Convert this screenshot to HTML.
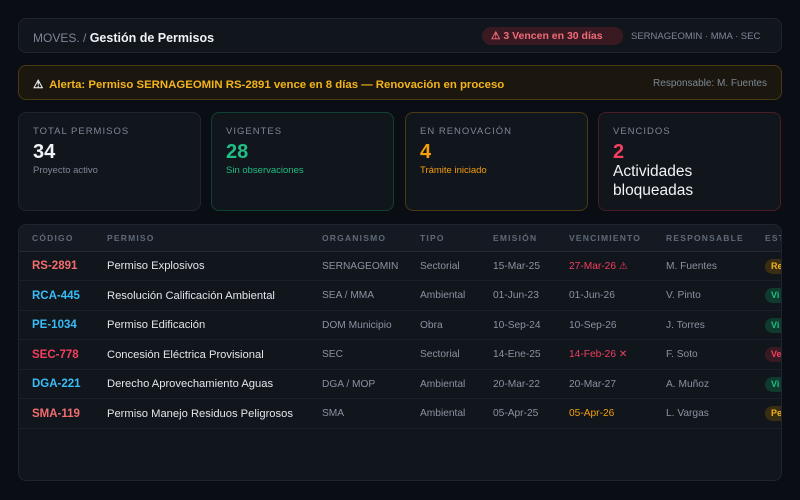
<!DOCTYPE html>
<html><head><meta charset="utf-8"><style>
*{box-sizing:border-box;margin:0;padding:0}
body{width:800px;height:500px;background:#0a0d13;font-family:"Liberation Sans",sans-serif;position:relative;overflow:hidden;color:#e6e9ef}
.box{position:absolute;border:1px solid #1f2530;border-radius:8px;background:#11151c}
.t{position:absolute;white-space:nowrap}
.lbl{font-size:9.5px;letter-spacing:1px;color:#7d8796}
.num{font-size:20px;font-weight:bold}
.sub{font-size:9.5px}
table{position:absolute;left:0;top:0;border-collapse:collapse;font-size:10.2px;width:820px}
th{height:26px;text-align:left;font-size:8.5px;letter-spacing:1.2px;color:#5f6978;font-weight:bold;background:#151a22;border-bottom:1px solid #232a35;padding:0}
td{height:29.5px;border-bottom:1px solid #1a1f28;padding:1px 0 0 0;color:#8a93a1}
.code{font-weight:bold;font-size:11.5px}
.nm{color:#e3e6eb;font-size:11.2px}
.b{display:inline-block;height:15px;width:24px;border-radius:8px;font-size:9px;font-weight:bold;padding:2px 0 0 6px;vertical-align:middle}
</style></head><body>
<div class="box" style="left:18px;top:18px;width:764px;height:35px">
 <div class="t" style="left:14px;top:12px;font-size:12px;color:#7d8796">MOVES. / <b style="color:#f1f3f6;font-size:12.5px">Gestión de Permisos</b></div>
 <div class="t" style="left:463px;top:8px;height:18px;width:141px;border-radius:9px;background:#3a1a22;color:#ef6b78;font-size:10.5px;font-weight:bold;padding:3px 0 0 9px">⚠ 3 Vencen en 30 días</div>
 <div class="t" style="left:612px;top:12px;font-size:9.5px;color:#7d8796">SERNAGEOMIN · MMA · SEC</div>
</div>
<div class="box" style="left:18px;top:65px;width:764px;height:35px;background:#1b170f;border-color:#4a3a14">
 <div class="t" style="left:14px;top:11px;font-size:11.4px;font-weight:bold;color:#f4b41a"><span style="color:#f1f3f6">⚠</span>&nbsp; Alerta: Permiso SERNAGEOMIN RS-2891 vence en 8 días — Renovación en proceso</div>
 <div class="t" style="right:14px;top:12px;font-size:10px;color:#7d8796">Responsable: M. Fuentes</div>
</div>
<div class="box" style="left:18px;top:112px;width:183px;height:99px">
 <div class="t lbl" style="left:14px;top:13px">TOTAL PERMISOS</div>
 <div class="t num" style="left:14px;top:28px;color:#f1f3f6">34</div>
 <div class="t sub" style="left:14px;top:52px;color:#7d8796">Proyecto activo</div>
</div>
<div class="box" style="left:211px;top:112px;width:183px;height:99px;border-color:#0f4236">
 <div class="t lbl" style="left:14px;top:13px">VIGENTES</div>
 <div class="t num" style="left:14px;top:28px;color:#1fbf86">28</div>
 <div class="t sub" style="left:14px;top:52px;color:#1fbf86">Sin observaciones</div>
</div>
<div class="box" style="left:405px;top:112px;width:183px;height:99px;border-color:#4a3a14">
 <div class="t lbl" style="left:14px;top:13px">EN RENOVACIÓN</div>
 <div class="t num" style="left:14px;top:28px;color:#f59e0b">4</div>
 <div class="t sub" style="left:14px;top:52px;color:#f59e0b">Trámite iniciado</div>
</div>
<div class="box" style="left:598px;top:112px;width:183px;height:99px;border-color:#4a1e26">
 <div class="t lbl" style="left:14px;top:13px">VENCIDOS</div>
 <div class="t num" style="left:14px;top:28px;color:#f43f5e">2</div>
 <div class="t" style="left:14px;top:49px;font-size:15.5px;line-height:19px;color:#f1f3f6;white-space:normal">Actividades<br>bloqueadas</div>
</div>
<div class="box" style="left:18px;top:224px;width:764px;height:257px;overflow:hidden">
<table>
<colgroup><col style="width:88px"><col style="width:215px"><col style="width:98px"><col style="width:73px"><col style="width:76px"><col style="width:97px"><col style="width:99px"><col></colgroup>
<tr><th style="padding-left:13px">CÓDIGO</th><th>PERMISO</th><th>ORGANISMO</th><th>TIPO</th><th>EMISIÓN</th><th>VENCIMIENTO</th><th>RESPONSABLE</th><th>ESTADO</th></tr>
<tr><td style="padding-left:13px" class="code"><span style="color:#f26d6d">RS-2891</span></td><td class="nm">Permiso Explosivos</td><td>SERNAGEOMIN</td><td>Sectorial</td><td>15-Mar-25</td><td style="color:#f43f5e">27-Mar-26 ⚠</td><td>M. Fuentes</td><td><span class="b" style="background:#3a2e12;color:#f4b41a">Re</span></td></tr>
<tr><td style="padding-left:13px" class="code"><span style="color:#38bdf8">RCA-445</span></td><td class="nm">Resolución Calificación Ambiental</td><td>SEA / MMA</td><td>Ambiental</td><td>01-Jun-23</td><td>01-Jun-26</td><td>V. Pinto</td><td><span class="b" style="background:#0f3a2e;color:#1fbf86">Vi</span></td></tr>
<tr><td style="padding-left:13px" class="code"><span style="color:#38bdf8">PE-1034</span></td><td class="nm">Permiso Edificación</td><td>DOM Municipio</td><td>Obra</td><td>10-Sep-24</td><td>10-Sep-26</td><td>J. Torres</td><td><span class="b" style="background:#0f3a2e;color:#1fbf86">Vi</span></td></tr>
<tr><td style="padding-left:13px" class="code"><span style="color:#f43f5e">SEC-778</span></td><td class="nm">Concesión Eléctrica Provisional</td><td>SEC</td><td>Sectorial</td><td>14-Ene-25</td><td style="color:#f43f5e">14-Feb-26 ✕</td><td>F. Soto</td><td><span class="b" style="background:#3a1a22;color:#f43f5e">Ve</span></td></tr>
<tr><td style="padding-left:13px" class="code"><span style="color:#38bdf8">DGA-221</span></td><td class="nm">Derecho Aprovechamiento Aguas</td><td>DGA / MOP</td><td>Ambiental</td><td>20-Mar-22</td><td>20-Mar-27</td><td>A. Muñoz</td><td><span class="b" style="background:#0f3a2e;color:#1fbf86">Vi</span></td></tr>
<tr><td style="padding-left:13px" class="code"><span style="color:#f26d6d">SMA-119</span></td><td class="nm">Permiso Manejo Residuos Peligrosos</td><td>SMA</td><td>Ambiental</td><td>05-Apr-25</td><td style="color:#f59e0b">05-Apr-26</td><td>L. Vargas</td><td><span class="b" style="background:#3a2e12;color:#f4b41a">Pe</span></td></tr>
</table>
</div>
</body></html>
